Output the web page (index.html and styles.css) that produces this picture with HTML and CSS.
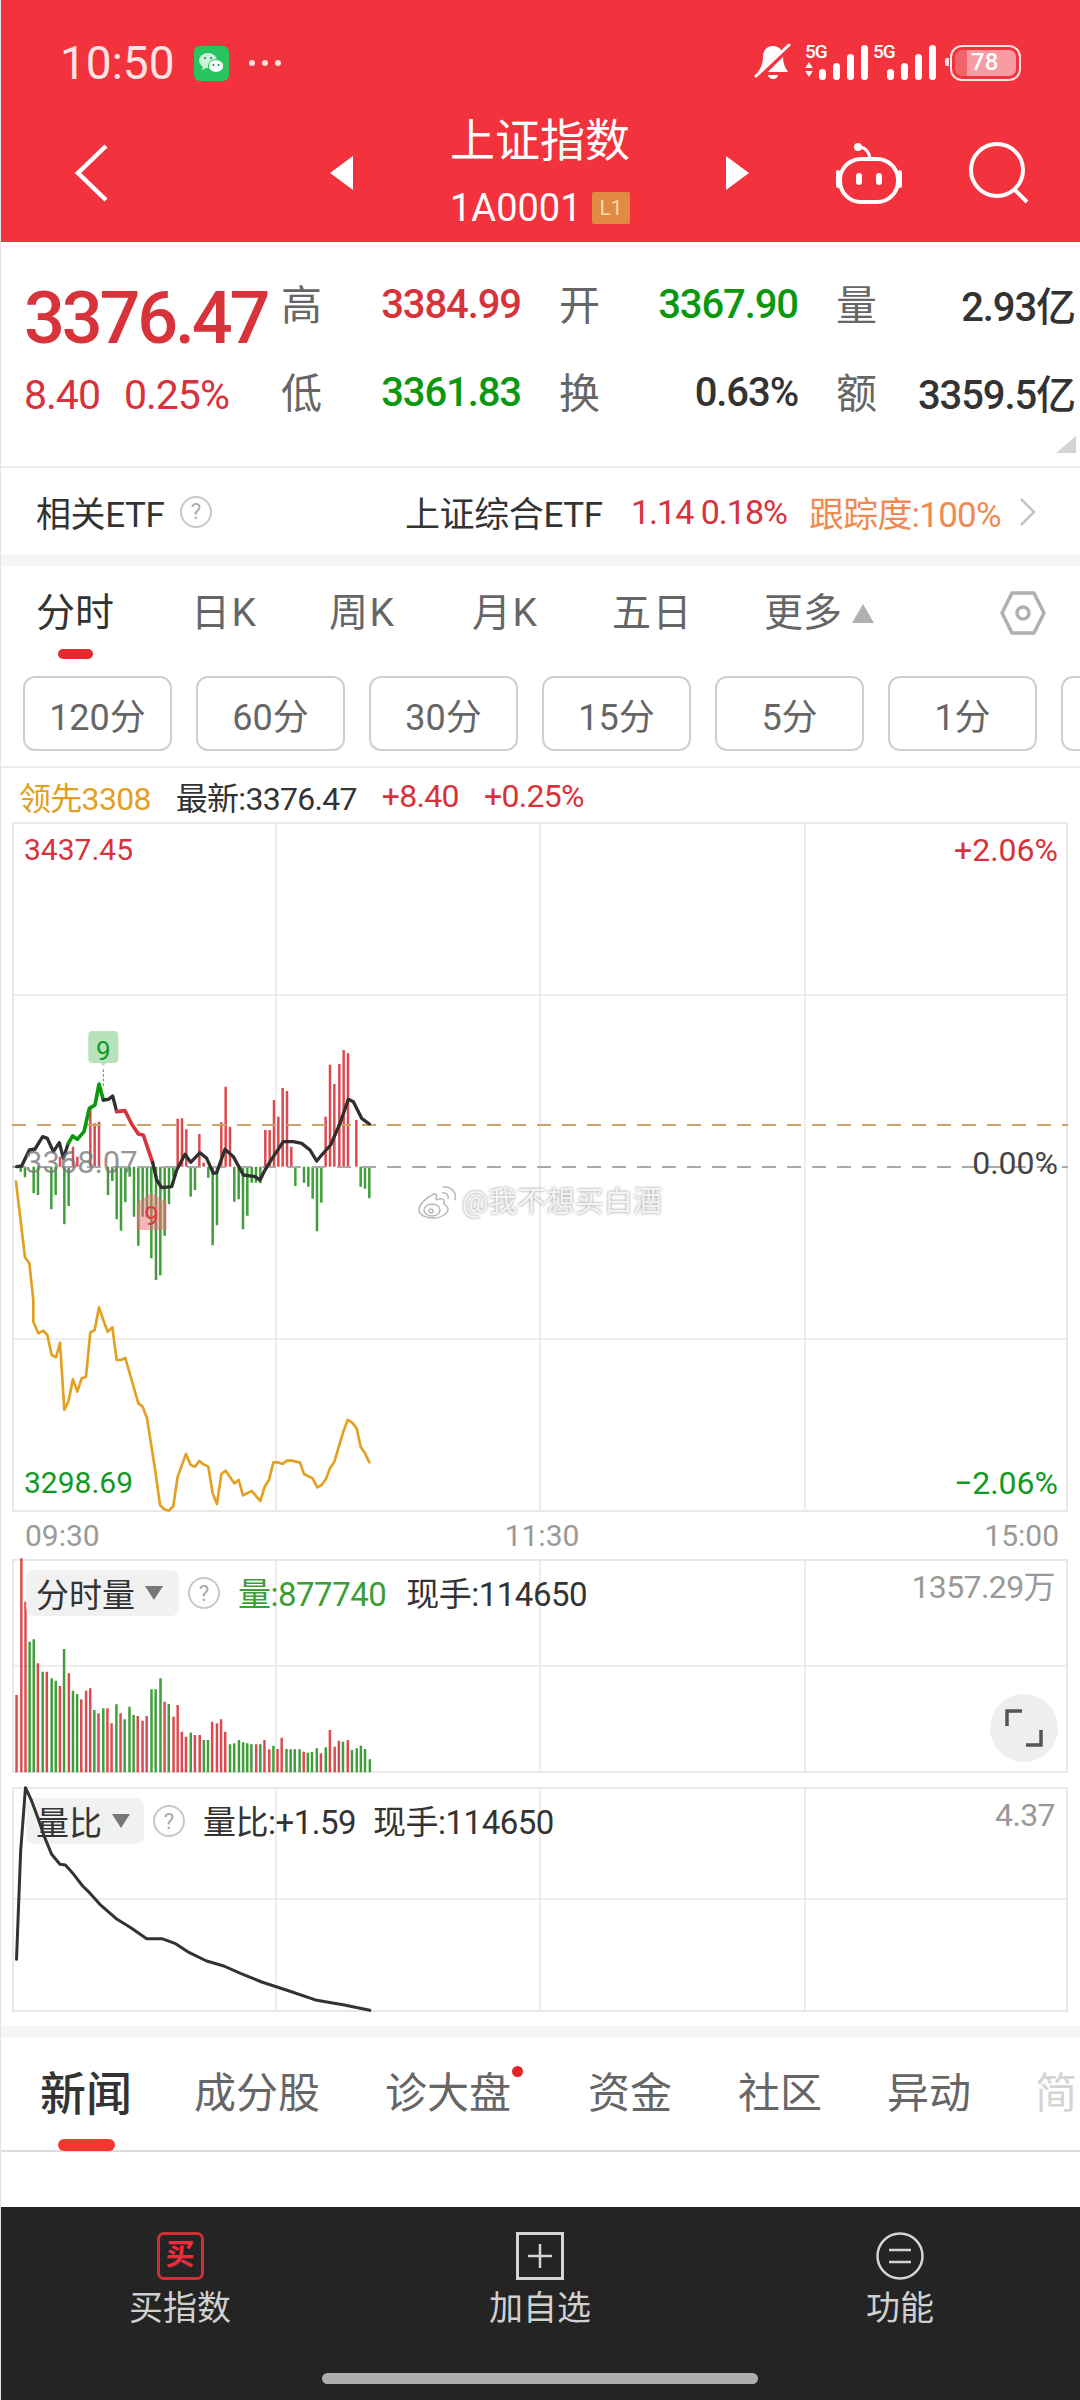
FILE: index.html
```html
<!DOCTYPE html>
<html lang="zh-CN">
<head>
  <meta charset="UTF-8" />
  <meta name="viewport" content="width=device-width, initial-scale=1.0"/>
  <title>上证指数</title>
  <link rel="stylesheet" href="styles.css">
</head>
<body>
  <div id="app">
    <!-- Red header -->
    <header class="header">
      <div class="status-bar">
        <span class="clock">10:50</span>
        <svg class="wechat" viewBox="0 0 35 35">
          <rect width="35" height="35" rx="6" fill="#27c45f"/>
          <ellipse cx="14" cy="14.5" rx="9" ry="7.6" fill="#c9f3d6"/>
          <path d="M9 20l-1 4 5-2.5z" fill="#c9f3d6"/>
          <ellipse cx="22" cy="20" rx="7.6" ry="6.4" fill="#fff" stroke="#27c45f" stroke-width="1"/>
          <circle cx="11" cy="12" r="1" fill="#27735a"/><circle cx="17" cy="12" r="1" fill="#27735a"/>
          <circle cx="19.5" cy="19" r="1" fill="#27735a"/><circle cx="24.5" cy="19" r="1" fill="#27735a"/>
        </svg>
        <span class="dots"><i></i><i></i><i></i></span>
        <div class="status-right">
          <svg class="bell" viewBox="0 0 38 40">
            <path d="M19 3c-7 0-10 5-10 11 0 6-2 11-5 15h30c-3-4-5-9-5-15 0-6-3-11-10-11z" fill="#fff"/>
            <path d="M14 32h10a5 4 0 0 1-10 0z" fill="#fff"/>
            <path d="M1 37L36 3" stroke="#f2323c" stroke-width="6"/>
            <path d="M2 33L35 2" stroke="#fff" stroke-width="3" stroke-linecap="round"/>
          </svg>
          <div class="signal">
            <div class="net"><b>5G</b><svg class="updown" viewBox="0 0 8 16"><path d="M4 0l4 6.5H0zM4 16L0 9.500h8z" fill="#fff"/></svg></div>
            <div class="bars"><i class="b1"></i><i class="b2"></i><i class="b3"></i><i class="b4"></i></div>
          </div>
          <div class="signal">
            <div class="net"><b>5G</b></div>
            <div class="bars"><i class="b1"></i><i class="b2"></i><i class="b3"></i><i class="b4"></i></div>
          </div>
          <div class="battery"><div class="battery-fill"><span>78</span></div></div>
        </div>
      </div>
      <nav class="nav">
        <svg class="back" viewBox="0 0 38 60"><path d="M34 3L6 30l28 27" fill="none" stroke="#fff" stroke-width="4.500"/></svg>
        <span class="tri tri-left"></span>
        <div class="title-block">
          <div class="title">上证指数</div>
          <div class="code">1A0001<span class="badge">L1</span></div>
        </div>
        <span class="tri tri-right"></span>
        <svg class="robot" viewBox="0 0 68 62">
          <circle cx="23" cy="5" r="4" fill="#fff"/>
          <path d="M25 5c6 1 9 5 10 11" fill="none" stroke="#fff" stroke-width="3"/>
          <rect x="5" y="17" width="58" height="43" rx="21" fill="none" stroke="#fff" stroke-width="4"/>
          <path d="M3 30v14M65 30v14" stroke="#fff" stroke-width="4" stroke-linecap="round"/>
          <rect x="21" y="31" width="6" height="12" rx="3" fill="#fff"/>
          <rect x="41" y="31" width="6" height="12" rx="3" fill="#fff"/>
        </svg>
        <svg class="search" viewBox="0 0 62 62"><circle cx="29" cy="28" r="26" fill="none" stroke="#fff" stroke-width="4"/><path d="M46 47l13 13" stroke="#fff" stroke-width="4"/></svg>
      </nav>
    </header>

    <main class="content">
      <!-- Quote -->
      <section class="quote">
        <div class="quote-main">
          <div class="price">3376.47</div>
          <div class="change"><span>8.40</span><span>0.25%</span></div>
        </div>
        <div class="stats">
          <div class="stat"><span class="stat-label">高</span><span class="red">3384.99</span></div>
          <div class="stat"><span class="stat-label">开</span><span class="green">3367.90</span></div>
          <div class="stat"><span class="stat-label">量</span><span class="dark">2.93亿</span></div>
          <div class="stat"><span class="stat-label">低</span><span class="green">3361.83</span></div>
          <div class="stat"><span class="stat-label">换</span><span class="dark">0.63%</span></div>
          <div class="stat"><span class="stat-label">额</span><span class="dark">3359.5亿</span></div>
        </div>
        <span class="corner"></span>
      </section>

      <section class="etf">
        <span class="etf-title">相关ETF</span><span class="help help-etf">?</span>
        <span class="etf-name">上证综合ETF</span>
        <span class="etf-red">1.14 0.18%</span>
        <span class="etf-track">跟踪度:100%</span>
        <svg class="chevron" viewBox="0 0 18 30"><path d="M2 2l13 13L2 28" fill="none" stroke="#c4c4c4" stroke-width="2.500"/></svg>
      </section>
      <div class="band"></div>

      <!-- Chart tabs -->
      <section class="tabs">
        <span class="tab active">分时</span>
        <span class="tab">日K</span>
        <span class="tab">周K</span>
        <span class="tab">月K</span>
        <span class="tab">五日</span>
        <span class="tab tab-more">更多<i class="tri-up"></i></span>
        <svg class="hex" viewBox="0 0 46 44"><path d="M12 2h22l10 20-10 20H12L2 22z" fill="none" stroke="#b0b0b0" stroke-width="3.500" stroke-linejoin="round"/><circle cx="23" cy="22" r="6" fill="none" stroke="#b0b0b0" stroke-width="3.500"/></svg>
      </section>
      <div class="periods">
        <span class="period">120分</span>
        <span class="period">60分</span>
        <span class="period">30分</span>
        <span class="period">15分</span>
        <span class="period">5分</span>
        <span class="period">1分</span>
        <span class="period"></span>
      </div>

      <div class="info-row">
        <span class="gold">领先3308</span>
        <span class="dark">最新:3376.47</span>
        <span class="red">+8.40</span>
        <span class="red">+0.25%</span>
      </div>

      <!-- Price chart -->
      <section class="chart chart-main">
        <svg class="plot" viewBox="0 0 1056 690">
          <g class="grid">
            <rect x="1" y="1" width="1054" height="688"/>
            <path d="M264 0V690M528 0V690M793 0V690M0 173H1056M0 517H1056"/>
          </g>
          <g transform="translate(-12,178) scale(.33333)">
            <path class="bar-up" d="M180 500V470M219 500V440M232 500V470M271 500V320M284 500V370M297 500V365M533 500V356M546 500V355M559 500V388M598 500V402M611 500V488M664 500V367M677 500V260M690 500V380M796 500V390M809 500V390M822 500V300M835 500V350M848 500V264M861 500V273M874 500V440M977 500V350M990 500V194M1003 500V252M1018 500V192M1031 500V150M1044 500V160M1069 500V360"/>
            <path class="bar-down" d="M62 500V515M75 500V532M101 500V580M114 500V585M154 500V628M167 500V585M193 500V673M206 500V618M324 500V585M337 500V543M350 500V658M363 500V692M376 500V607M389 500V530M402 500V650M415 500V737M428 500V650M441 500V650M454 500V775M468 500V840M481 500V826M494 500V707M507 500V613M520 500V530M572 500V590M585 500V570M625 500V533M638 500V736M651 500V676M703 500V605M716 500V598M729 500V688M742 500V647M755 500V548M768 500V548M781 500V550M886 500V558M912 500V548M925 500V560M938 500V596M951 500V694M964 500V608M1082 500V560M1095 500V566M1108 500V595"/>
          </g>
          <path class="dash-gold" d="M0 303H1056"/>
          <path class="dash-mid" d="M0 345H1056"/>
          <g transform="translate(-12,478) scale(.33333)">
            <polyline class="line-gold" points="48,-355 75,-128 88,-110 100,0 100,65 115,100 130,92 142,105 155,165 168,172 180,128 193,330 205,305 219,238 232,275 245,235 258,230 271,97 284,90 297,22 310,60 323,95 337,82 350,180 363,180 376,174 415,310 428,320 441,355 467,520 480,615 493,628 507,632 520,618 533,530 558,462 572,495 585,500 598,483 611,493 625,500 638,580 651,612 664,522 677,512 703,550 716,540 729,586 755,573 781,603 794,560 807,540 820,487 833,487 848,492 861,482 875,482 900,488 912,522 938,535 952,562 965,555 978,537 990,505 1003,485 1030,395 1043,360 1057,368 1070,385 1082,440 1095,460 1108,487"/>
          </g>
          <g transform="translate(-12,178) scale(.33333)">
            <polyline class="line-dark" points="50,500 65,498 88,450 105,447 128,410 142,415 160,455 178,428 190,475 205,430"/>
            <polyline class="line-green" points="205,430 218,408 232,418 252,395 268,325 285,315 297,252 310,300"/>
            <polyline class="line-dark" points="310,300 325,298 338,288 350,335"/>
            <polyline class="line-red" points="350,335 375,332 395,372 415,402 430,405 458,488"/>
            <polyline class="line-dark" points="458,488 470,540 485,563 515,560 530,510 555,463 572,487 600,458 620,475 640,520 650,518 675,448 700,470 730,525 765,530 780,540 795,510 820,470 850,425 880,425 905,430 930,450 950,483 965,465 992,435 1020,370 1045,298 1060,305 1085,355 1108,372"/>
            <path d="M310 208V265" stroke="#2e9e3a" stroke-width="3" stroke-dasharray="8 6"/>
            <path d="M277 93h66a12 12 0 0 1 12 12v72a12 12 0 0 1-12 12h-24l-9 9-9-9h-24a12 12 0 0 1-12-12v-72a12 12 0 0 1 12-12z" fill="#b7e2bb"/>
            <text class="tag-text" x="310" y="180" fill="#0f9a24">9</text>
            <path d="M455 578l45 30v82h-90v-82z" fill="rgba(236,110,120,.5)"/>
            <text class="tag-text" x="455" y="675" fill="#e0383e">9</text>
          </g>
        </svg>
        <span class="axis-label tl red-label">3437.45</span>
        <span class="axis-label tr red-label">+2.06%</span>
        <span class="axis-label ml">3368.07</span>
        <span class="axis-label mr">0.00%</span>
        <span class="axis-label bl green-label">3298.69</span>
        <span class="axis-label br green-label">−2.06%</span>
        <div class="watermark">
          <svg viewBox="0 0 40 34"><g fill="none" stroke="#b9b9b9" stroke-width="1.500"><path d="M17 9C8 13 2 20 2 25c0 5 7 8 14 8 9 0 15-5 15-9 0-3-3-4-4-5 1-3 0-6-5-5-2 1-3 1-3 0 1-3 1-6-2-5z"/><ellipse cx="15" cy="25" rx="8" ry="6"/><circle cx="14" cy="26" r="2"/><path d="M25 8c4-1 7 2 6 6M26 2c8-1 14 5 12 13"/></g></svg>
          <span>@我不想买白酒</span>
        </div>
      </section>

      <div class="time-axis"><span>09:30</span><span>11:30</span><span>15:00</span></div>

      <!-- Volume chart -->
      <section class="chart chart-vol">
        <svg class="plot" viewBox="0 0 1056 214">
          <g class="grid">
            <rect x="1" y="1" width="1054" height="212"/>
            <path d="M264 0V214M528 0V214M793 0V214M0 107H1056"/>
          </g>
          <g transform="translate(-12,-9) scale(.6887,.33333)">
            <path class="vol-up" d="M24 667V435M31 667V25M37 667V155M55 667V340M68 667V365M87 667V408M100 667V370M118 667V448M125 667V422M131 667V415M143 667V490M156 667V475M162 667V520M175 667V490M200 667V498M207 667V512M213 667V498M239 667V455M252 667V500M258 667V465M264 667V545M270 667V560M283 667V555M290 667V555M308 667V515M315 667V520M321 667V508M327 667V545M372 667V583M384 667V570M391 667V598M403 667V597M409 667V563M441 667V605M466 667V610M479 667V540M486 667V590M492 667V572M505 667V570"/>
            <path class="vol-down" d="M43 667V275M49 667V268M62 667V365M75 667V385M81 667V392M93 667V297M106 667V422M112 667V432M137 667V480M150 667V475M169 667V463M181 667V508M188 667V470M194 667V495M220 667V418M226 667V418M233 667V385M245 667V462M277 667V548M296 667V570M302 667V570M334 667V583M340 667V580M347 667V570M353 667V577M359 667V580M365 667V583M378 667V583M397 667V587M416 667V597M422 667V598M428 667V598M435 667V598M447 667V608M453 667V606M460 667V595M473 667V592M498 667V575M511 667V600M518 667V595M524 667V587M530 667V597M537 667V628"/>
          </g>
        </svg>
        <div class="legend">
          <span class="chip chip-vol">分时量<i class="tri-down"></i></span>
          <span class="help">?</span>
          <span class="legend-green">量:877740</span>
          <span class="legend-dark">现手:114650</span>
        </div>
        <span class="max-label">1357.29万</span>
        <div class="expand">
          <svg viewBox="0 0 38 38"><path d="M2 17V2h15M36 21v15H21" fill="none" stroke="#555" stroke-width="3.500"/></svg>
        </div>
      </section>

      <!-- Volume ratio chart -->
      <section class="chart chart-ratio">
        <svg class="plot" viewBox="0 0 1056 225">
          <g class="grid">
            <rect x="1" y="1" width="1054" height="223"/>
            <path d="M264 0V225M528 0V225M793 0V225M0 112H1056"/>
          </g>
        </svg>
        <div class="legend">
          <span class="chip chip-ratio">量比<i class="tri-down"></i></span>
          <span class="help">?</span>
          <span class="legend-dark">量比:+1.59</span>
          <span class="legend-dark legend-hand">现手:114650</span>
        </div>
        <span class="max-label max-ratio">4.37</span>
        <svg class="plot" viewBox="0 0 1056 225">
          <g transform="translate(-12,-236) scale(.6887,.33333)">
            <polyline class="line-ratio" points="24,1225 30,900 37,710 45,745 55,800 65,860 75,910 87,940 95,942 105,965 120,1005 130,1025 145,1060 170,1105 190,1130 213,1163 235,1163 255,1178 275,1205 300,1230 325,1245 350,1268 380,1293 420,1320 460,1348 500,1362 537,1378"/>
          </g>
        </svg>
      </section>
      <div class="band band-low"></div>

      <!-- News tabs -->
      <section class="news-tabs">
        <span class="news-tab active">新闻</span>
        <span class="news-tab">成分股</span>
        <span class="news-tab dotted">诊大盘</span>
        <span class="news-tab">资金</span>
        <span class="news-tab">社区</span>
        <span class="news-tab">异动</span>
        <span class="news-tab faded">简</span>
      </section>
    </main>

    <!-- Bottom bar -->
    <footer class="footer">
      <div class="actions">
        <div class="action">
          <span class="buy-icon">买</span>
          <span>买指数</span>
        </div>
        <div class="action">
          <svg class="action-icon" viewBox="0 0 48 48"><rect x="1.500" y="1.500" width="45" height="45" fill="none" stroke="#d4d4d4" stroke-width="3"/><path d="M24 12v24M12 24h24" stroke="#d4d4d4" stroke-width="2.500"/></svg>
          <span>加自选</span>
        </div>
        <div class="action">
          <svg class="action-icon" viewBox="0 0 48 48"><circle cx="24" cy="24" r="22.500" fill="none" stroke="#d4d4d4" stroke-width="2.500"/><path d="M13 18h22M13 30h22" stroke="#d4d4d4" stroke-width="2.500"/></svg>
          <span>功能</span>
        </div>
      </div>
      <div class="home-pill"></div>
    </footer>
  </div>
</body>
</html>
```

FILE: styles.css
```css
* { box-sizing: border-box; }
body {
  margin: 0;
  font-family: Roboto, "Noto Sans CJK SC", sans-serif;
  background: #fff;
  color: #333;
}
i { display: block; font-style: normal; }
#app {
  width: 1080px;
  height: 2400px;
  display: flex;
  flex-direction: column;
  overflow: hidden;
  border-left: 1px solid #e4e4e4;
}
.red { color: #d8323a; }
.green { color: #0a980f; }
.dark { color: #333; }
.gold { color: #e2a01e; }

/* header */
.header {
  background: #f2323c;
  height: 242px;
  margin-left: -1px;
  color: #fff;
  flex: none;
}
.status-bar {
  display: flex;
  align-items: center;
  height: 110px;
  padding: 16px 59px 0 60px;
}
.clock { font-size: 46px; color: #ffe3e3; width: 134px; }
.wechat { width: 35px; height: 35px; }
.dots { display: flex; gap: 7px; margin-left: 20px; }
.dots i { width: 6px; height: 6px; border-radius: 50%; background: #ffe3e3; }
.status-right { display: flex; align-items: center; margin-left: auto; }
.bell { width: 38px; height: 40px; margin-right: 13px; }
.signal { display: flex; align-items: flex-end; height: 36px; margin: 0 5px 3px 0; }
.net { width: 24px; height: 36px; display: flex; flex-direction: column; }
.net b { font-size: 19px; line-height: 15px; font-weight: 500; letter-spacing: -1px; }
.updown { width: 8px; height: 15px; margin-top: 3px; }
.bars { display: flex; align-items: flex-end; gap: 7px; margin-left: -10px; }
.bars i { width: 7px; background: #fff; border-radius: 4px; }
.b1 { height: 11px; }
.b2 { height: 17px; }
.b3 { height: 26px; }
.b4 { height: 35px; }
.battery {
  width: 71px;
  height: 36px;
  border: 2.5px solid #ffe3e3;
  border-radius: 12px;
  padding: 3px;
  margin-left: 9px;
  position: relative;
}
.battery::before {
  content: "";
  position: absolute;
  left: -7px;
  top: 11px;
  width: 4px;
  height: 8px;
  background: #ffe3e3;
  border-radius: 2px 0 0 2px;
}
.battery-fill {
  height: 100%;
  background: linear-gradient(to right, #f0636c 20%, #f79aa1 20%);
  border-radius: 7px;
  font-size: 24px;
  line-height: 25px;
  font-weight: 500;
  color: #fff;
  padding-left: 16px;
}
.nav { display: flex; align-items: center; height: 126px; padding-left: 72px; }
.back { width: 38px; height: 60px; flex: none; }
.tri { width: 0; height: 0; border-style: solid; flex: none; }
.tri-left { border-width: 17px 23px 17px 0; border-color: transparent #fff transparent transparent; margin-left: 220px; }
.tri-right { border-width: 17px 0 17px 23px; border-color: transparent transparent transparent #fff; margin-left: 96px; }
.title-block { width: 180px; margin-left: 97px; text-align: center; flex: none; }
.title { font-size: 45px; line-height: 44px; white-space: nowrap; }
.code { display: flex; align-items: center; justify-content: space-between; font-size: 38px; line-height: 36px; margin-top: 26px; color: #fff; }
.badge {
  width: 38px;
  height: 32px;
  background: #e08a44;
  border-radius: 2px;
  font-size: 21px;
  line-height: 32px;
  color: #ffd9a8;
}
.robot { width: 68px; height: 62px; margin-left: 86px; flex: none; }
.search { width: 62px; height: 62px; margin-left: 65px; flex: none; }

/* main */
.content { flex: 1; overflow: hidden; }
.quote {
  display: flex;
  height: 226px;
  padding-left: 23px;
  border-bottom: 2px solid #eee;
  position: relative;
}
.quote-main { width: 257px; flex: none; }
.price {
  font-size: 72px;
  line-height: 72px;
  font-weight: 500;
  letter-spacing: -3.2px;
  color: #d8323a;
  margin-top: 41px;
}
.change {
  display: flex;
  gap: 24px;
  font-size: 41px;
  line-height: 44px;
  letter-spacing: -1px;
  color: #d8323a;
  margin-top: 18px;
}
.stats {
  display: grid;
  grid-template-columns: 240px 239px 239px;
  column-gap: 38px;
  grid-auto-rows: 88px;
  margin-top: 40px;
}
.stat {
  display: flex;
  justify-content: space-between;
  align-items: center;
  height: 44px;
  font-size: 40px;
  font-weight: 500;
  letter-spacing: -1.1px;
}
.stat-label { font-size: 41px; font-weight: 400; color: #666; letter-spacing: 0; margin-top: -5px; }
.corner {
  position: absolute;
  right: 4px;
  bottom: 13px;
  width: 20px;
  height: 17px;
  background: #d4d4d4;
  clip-path: polygon(100% 0, 100% 100%, 0 100%);
}
.etf {
  display: flex;
  align-items: center;
  height: 87px;
  padding-left: 35px;
  font-size: 35px;
  letter-spacing: -.4px;
}
.etf-title { width: 144px; }
.help {
  display: flex;
  align-items: center;
  justify-content: center;
  width: 32px;
  height: 32px;
  border: 2px solid #c8c8c8;
  border-radius: 50%;
  font-size: 22px;
  color: #aaa;
  flex: none;
  letter-spacing: 0;
}
.etf-name { margin-left: 193px; width: 226px; }
.etf-red { color: #d8323a; width: 178px; letter-spacing: -1px; font-size: 34px; }
.etf-track { color: #ef8b50; width: 210px; letter-spacing: -.8px; }
.chevron { width: 18px; height: 30px; }
.band { height: 11px; background: #f5f5f5; }
.band-low { margin-top: 14px; }
.tabs {
  display: grid;
  grid-template-columns: 155px 138px 143px 140px 152px 236px auto;
  align-items: center;
  height: 110px;
  padding: 0 0 16px 35px;
  position: relative;
}
.tab { font-size: 39px; color: #666; line-height: 46px; letter-spacing: 1.5px; }
.tab.active { color: #333; letter-spacing: 0; }
.tab.active::after {
  content: "";
  position: absolute;
  left: 57px;
  top: 83px;
  width: 35px;
  height: 10px;
  border-radius: 5px;
  background: #e8282f;
}
.tab-more { display: flex; align-items: center; letter-spacing: 0; }
.tri-up {
  width: 0;
  height: 0;
  margin-left: 10px;
  border-style: solid;
  border-width: 0 11px 19px 11px;
  border-color: transparent transparent #b0b0b0 transparent;
}
.hex { width: 46px; height: 44px; }
.periods {
  display: flex;
  gap: 24px;
  padding-left: 22px;
  height: 92px;
  border-bottom: 2px solid #eee;
  flex-wrap: nowrap;
}
.period {
  width: 149px;
  height: 75px;
  flex: none;
  display: flex;
  align-items: center;
  justify-content: center;
  border: 2px solid #cfcfcf;
  border-radius: 12px;
  font-size: 36px;
  color: #666;
}
.info-row {
  display: flex;
  align-items: center;
  gap: 25px;
  height: 54px;
  padding: 2px 0 0 18px;
  font-size: 32px;
  letter-spacing: -.7px;
}
.info-row .red:last-child { margin-left: 0; }

/* charts */
.chart { position: relative; margin-left: 11px; width: 1056px; }
.chart-main { height: 690px; }
.chart-vol { height: 214px; }
.chart-ratio { height: 225px; margin-top: 14px; }
.plot { position: absolute; left: 0; top: 0; width: 100%; height: 100%; overflow: visible; }
.grid rect { fill: none; stroke: #e8e8e8; stroke-width: 2; }
.grid path { stroke: #e8e8e8; stroke-width: 1.5; fill: none; }
.bar-up, .bar-down { fill: none; stroke-width: 7.500; }
.bar-up { stroke: #dc4a50; }
.bar-down { stroke: #3f9e3a; }
.dash-gold { stroke: #c9a568; stroke-width: 2; stroke-dasharray: 14 11; fill: none; }
.dash-mid { stroke: #aaa; stroke-width: 2; stroke-dasharray: 14 11; fill: none; }
polyline { fill: none; stroke-linejoin: round; stroke-linecap: round; }
.line-gold { stroke: #e4a021; stroke-width: 8; }
.line-dark { stroke: #2f2f2f; stroke-width: 10; }
.line-green { stroke: #0a980f; stroke-width: 11; }
.line-red { stroke: #d8323a; stroke-width: 11; }
.tag-text { font-size: 78px; text-anchor: middle; }
.vol-up, .vol-down { fill: none; stroke-width: 3.600; }
.vol-up { stroke: #dc4a50; }
.vol-down { stroke: #3f9e3a; }
.line-ratio { stroke: #333; stroke-width: 3; vector-effect: non-scaling-stroke; }
.axis-label { position: absolute; font-size: 30px; line-height: 36px; }
.red-label { color: #d8323a; }
.green-label { color: #0f9a24; }
.tl { left: 12px; top: 10px; }
.tr { right: 10px; top: 10px; font-size: 32px; }
.ml { left: 13px: top: 323px; left: 13px; top: 323px; font-size: 31px; color: rgba(120,120,120,.8); }
.mr { right: 10px; top: 323px; color: #444; font-size: 32px; }
.bl { left: 12px; top: 643px; }
.br { right: 10px; top: 643px; font-size: 32px; }
.watermark {
  position: absolute;
  left: 405px;
  top: 360px;
  display: flex;
  align-items: center;
  gap: 5px;
  font-size: 29px;
  line-height: 40px;
  color: #f4f4f4;
  text-shadow: 0 0 3px #8c8c8c;
}
.watermark svg { width: 40px; height: 34px; }
.time-axis {
  display: flex;
  justify-content: space-between;
  align-items: center;
  height: 47px;
  padding: 0 21px 0 24px;
  font-size: 30px;
  color: #999;
}
.legend {
  position: absolute;
  left: 14px;
  top: 11px;
  display: flex;
  align-items: center;
  height: 46px;
  font-size: 33px;
  letter-spacing: -.5px;
  white-space: nowrap;
}
.chip {
  display: flex;
  align-items: center;
  height: 46px;
  padding-left: 10px;
  background: rgba(238,238,238,.8);
  border-radius: 8px;
  font-size: 33px;
  color: #333;
  letter-spacing: 0;
}
.chip-vol { width: 153px; }
.chip-ratio { width: 118px; }
.tri-down {
  width: 0;
  height: 0;
  margin-left: 10px;
  border-style: solid;
  border-width: 14px 9px 0 9px;
  border-color: #777 transparent transparent transparent;
}
.legend .help { margin: 0 18px 0 9px; }
.legend-green { color: #3c9e34; margin-right: 20px; }
.legend-dark { color: #333; margin-top: -3px; }
.legend-green { margin-top: -3px; }
.legend-hand { margin-left: 17px; }
.max-label { position: absolute; right: 13px; top: 9px; font-size: 32px; line-height: 38px; color: #999; letter-spacing: -.6px; }
.max-ratio { top: 9px; }
.expand {
  position: absolute;
  right: 10px;
  top: 135px;
  width: 68px;
  height: 68px;
  border-radius: 50%;
  background: #eee;
  display: flex;
  align-items: center;
  justify-content: center;
}
.expand svg { width: 38px; height: 38px; }

/* news tabs */
.news-tabs {
  display: grid;
  grid-template-columns: 154px 191px 203px 150px 149px 148px auto;
  align-items: center;
  height: 115px;
  padding: 0 0 0 39px;
  border-bottom: 2px solid #ddd;
  position: relative;
}
.news-tab { font-size: 42px; line-height: 50px; color: #666; }
.news-tab.active { font-size: 46px; font-weight: 500; color: #333; }
.news-tab.active::after {
  content: "";
  position: absolute;
  left: 57px;
  bottom: -1px;
  width: 57px;
  height: 12px;
  border-radius: 6px;
  background: #f5372f;
}
.dotted { position: relative; }
.dotted::after {
  content: "";
  position: absolute;
  left: 127px;
  top: -3px;
  width: 11px;
  height: 11px;
  border-radius: 50%;
  background: #e0242a;
}
.faded { color: #d4d4d4; }

/* bottom bar */
.footer {
  height: 193px;
  flex: none;
  margin-left: -1px;
  background: #242424;
  color: #d0d0d0;
  padding-top: 25px;
}
.actions { display: grid; grid-template-columns: repeat(3, 360px); }
.action {
  display: flex;
  flex-direction: column;
  align-items: center;
  gap: 6px;
  font-size: 34px;
  line-height: 44px;
}
.action-icon { width: 48px; height: 48px; }
.buy-icon {
  width: 47px;
  height: 48px;
  border: 3px solid #cf3036;
  border-radius: 7px;
  color: #ee2d3c;
  font-size: 29px;
  line-height: 40px;
  font-weight: 700;
  text-align: center;
}
.home-pill {
  width: 436px;
  height: 11px;
  margin: 43px auto 0;
  border-radius: 6px;
  background: #aeaeae;
}
```
